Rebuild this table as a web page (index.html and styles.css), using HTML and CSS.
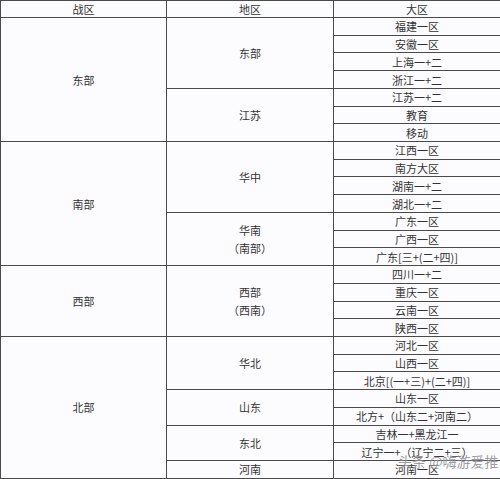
FILE: index.html
```html
<!DOCTYPE html>
<html lang="zh">
<head>
<meta charset="utf-8">
<link rel="stylesheet" href="styles.css">
</head>
<body>
<div class="wrap">
<table class="zones">
<colgroup><col class="c1"><col class="c2"><col class="c3"></colgroup>
<thead>
<tr class="head"><th>战区</th><th>地区</th><th>大区</th></tr>
</thead>
<tbody>
<tr><td rowspan="7">东部</td><td rowspan="4">东部</td><td>福建一区</td></tr>
<tr><td>安徽一区</td></tr>
<tr><td>上海一+二</td></tr>
<tr><td>浙江一+二</td></tr>
<tr><td rowspan="3">江苏</td><td>江苏一+二</td></tr>
<tr><td>教育</td></tr>
<tr><td>移动</td></tr>
<tr><td rowspan="7">南部</td><td rowspan="4">华中</td><td>江西一区</td></tr>
<tr><td>南方大区</td></tr>
<tr><td>湖南一+二</td></tr>
<tr><td>湖北一+二</td></tr>
<tr><td rowspan="3" class="two">华南<br>（南部）</td><td>广东一区</td></tr>
<tr><td>广西一区</td></tr>
<tr><td>广东[三+(二+四)]</td></tr>
<tr><td rowspan="4">西部</td><td rowspan="4" class="two">西部<br>（西南）</td><td>四川一+二</td></tr>
<tr><td>重庆一区</td></tr>
<tr><td>云南一区</td></tr>
<tr><td>陕西一区</td></tr>
<tr><td rowspan="8">北部</td><td rowspan="3">华北</td><td>河北一区</td></tr>
<tr><td>山西一区</td></tr>
<tr><td>北京[(一+三)+(二+四)]</td></tr>
<tr><td rowspan="2">山东</td><td>山东一区</td></tr>
<tr><td>北方+（山东二+河南二）</td></tr>
<tr><td rowspan="2">东北</td><td>吉林一+黑龙江一</td></tr>
<tr><td>辽宁一+（辽宁二+三）</td></tr>
<tr><td>河南</td><td>河南一区</td></tr>
</tbody>
</table>
<div class="mark">头条 @嗨游爱推</div>
</div>
</body>
</html>
```
FILE: styles.css
```css
html, body {
  margin: 0;
  padding: 0;
  background: #fcfcfe;
}
.wrap {
  position: relative;
  width: 500px;
  height: 479px;
  overflow: hidden;
}
.zones {
  width: 500px;
  table-layout: fixed;
  border-collapse: collapse;
  font-family: "Noto Sans CJK SC", "Noto Sans", sans-serif;
  font-size: 11px;
  color: #333;
  background: #fcfcfe;
}
.c1 { width: 166px; }
.c2 { width: 167px; }
.c3 { width: 167px; }
.zones th, .zones td {
  border: 1px solid #4a4a4a;
  padding: 0;
  text-align: center;
  vertical-align: middle;
  font-weight: normal;
  line-height: 16px;
  height: 16.73px;
}
.zones .head th {
  height: 16px;
}
.zones td.two {
  line-height: 18px;
}
.mark {
  position: absolute;
  left: 398px;
  top: 451px;
  font-family: "Noto Sans CJK SC", sans-serif;
  font-size: 14px;
  color: rgba(70, 70, 80, 0.55);
  white-space: nowrap;
  text-shadow: 0 0 1px rgba(255,255,255,0.8);
}
```
